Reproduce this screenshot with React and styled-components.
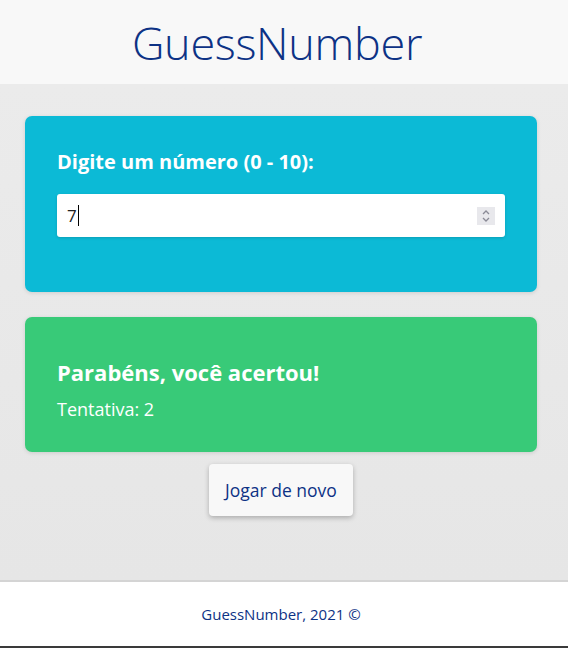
import React from "react"
import styled, { createGlobalStyle } from "styled-components"

const Global = createGlobalStyle`
  html, body { margin: 0; padding: 0; }
  body {
    font-family: "Open Sans", "Noto Sans", sans-serif;
    background: #e9e9e9;
  }
`

const Page = styled.div`
  display: flex;
  flex-direction: column;
  min-height: 648px;
`

const Header = styled.header`
  height: 84px;
  background: #f8f8f8;
  display: flex;
  align-items: center;
  justify-content: center;
  padding-right: 14px;
`

const Title = styled.h1`
  margin: 0;
  font-size: 45px;
  font-weight: 300;
  color: #0d3285;
  letter-spacing: -0.3px;
`

const Main = styled.main`
  flex: 1;
  display: flex;
  flex-direction: column;
  align-items: center;
  gap: 25px;
  padding: 32px 31px 62px 25px;
  background: linear-gradient(180deg, #ebebeb 0%, #e6e6e6 100%);
`

const Card = styled.section`
  align-self: stretch;
  background: ${p => p.$bg};
  border-radius: 7px;
  padding: ${p => p.$pad};
  box-shadow: 0 1px 4px rgba(0, 0, 0, 0.12);
  color: #fff;
`

const Label = styled.label`
  display: block;
  font-size: 20px;
  font-weight: 700;
  margin-bottom: 19px;
`

const InputWrap = styled.div`
  position: relative;
  height: 43px;
  background: #fff;
  border-radius: 3px;
  box-shadow: 0 1px 3px rgba(0, 0, 0, 0.15);
  display: flex;
  align-items: center;
  padding: 0 10px;
  color: #222;
  font-size: 17px;
`

const Caret = styled.span`
  display: inline-block;
  width: 1px;
  height: 21px;
  background: #000;
  margin-left: 1px;
`

const Spinner = styled.div`
  position: absolute;
  right: 10px;
  top: 13px;
  width: 18px;
  height: 18px;
  background: #e8e8ec;
  display: flex;
  align-items: center;
  justify-content: center;
`

const ResultTitle = styled.h2`
  margin: 0 0 10px;
  font-size: 22px;
  font-weight: 700;
`

const ResultText = styled.p`
  margin: 0;
  font-size: 18px;
  font-weight: 400;
`

const Button = styled.button`
  margin-top: -13px;
  width: 144px;
  height: 52px;
  border: none;
  border-radius: 4px;
  background: #f8f8f8;
  color: #0d3285;
  font-family: inherit;
  font-size: 17.5px;
  box-shadow: 0 2px 5px rgba(0, 0, 0, 0.25);
  cursor: pointer;
`

const Footer = styled.footer`
  height: 64px;
  background: #fff;
  border-top: 2px solid #d4d4d4;
  border-bottom: 2px solid #3a3a3a;
  display: flex;
  align-items: center;
  justify-content: center;
  padding-right: 6px;
  font-size: 15px;
  color: #0d3285;
`

export default function App() {
  return (
    <Page>
      <Global />
      <Header>
        <Title>GuessNumber</Title>
      </Header>
      <Main>
        <Card $bg="#0cbad6" $pad="32px 32px 55px">
          <Label>Digite um número (0 - 10):</Label>
          <InputWrap>
            7<Caret />
            <Spinner>
              <svg width="10" height="14" viewBox="0 0 10 14" fill="none" stroke="#8a8a96" strokeWidth="1.3">
                <path d="M2 5 L5 2 L8 5" />
                <path d="M2 9 L5 12 L8 9" />
              </svg>
            </Spinner>
          </InputWrap>
        </Card>
        <Card $bg="#38ca78" $pad="40px 32px 31px">
          <ResultTitle>Parabéns, você acertou!</ResultTitle>
          <ResultText>Tentativa: 2</ResultText>
        </Card>
        <Button>Jogar de novo</Button>
      </Main>
      <Footer>GuessNumber, 2021 ©</Footer>
    </Page>
  )
}
